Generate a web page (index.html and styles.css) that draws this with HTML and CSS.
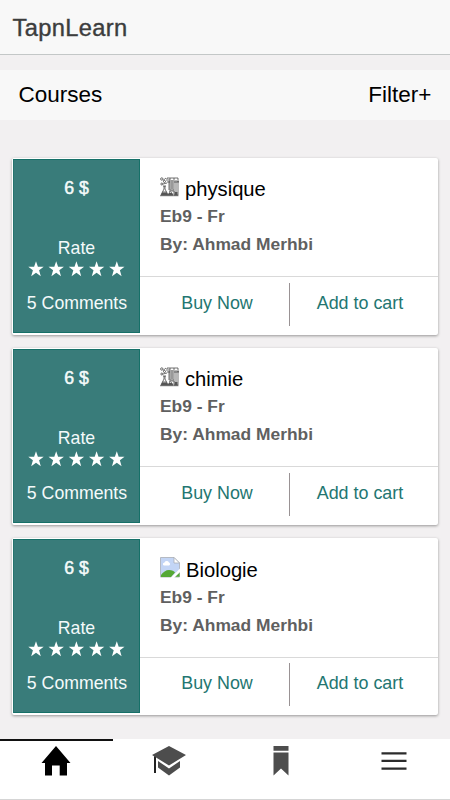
FILE: index.html
```html
<!DOCTYPE html>
<html lang="en">
<head>
<meta charset="utf-8">
<title>TapnLearn</title>
<link rel="stylesheet" href="styles.css">
</head>
<body>
<svg class="defs" width="0" height="0" aria-hidden="true">
  <symbol id="stars" viewBox="0 0 98 16">
    <path id="star" d="M8 .2 9.900 5.700H15.700L11.100 9.300 12.800 15.200 8 11.800 3.200 15.200 4.900 9.300.3 5.700H6.100Z"/>
    <use href="#star" x="20.200"/><use href="#star" x="40.400"/><use href="#star" x="60.600"/><use href="#star" x="80.800"/>
  </symbol>
  <symbol id="lab" viewBox="0 0 20 20">
    <g fill="none" stroke="#333" stroke-width=".7">
      <circle cx="1.800" cy="2" r="1.200"/><circle cx="4.500" cy="4.500" r="1"/><circle cx="1.800" cy="7" r="1"/>
      <path d="M3 3.500 6 1M3 7l4-1M7 4V1h11v4M7 5h3M14 5h5M9 2v11M10 1v12h4V1M16 3v10M18 4v14M3 9h3M4 9v3L1 18h7L5 12V9M2.500 15h4M9 14h8M10 14v1l-2 3h5l-2-3M14 14v4h4M0 18.700h18.500"/>
    </g>
    <path fill="#999" d="M10.500 3h3v9.500h-3z"/>
    <path fill="#555" d="m2 15.500-1 2.500h7l-1-2.500zM9 16l-1 2h5l-1-2zM14.500 15h3v3h-3z"/>
  </symbol>
</svg>

<header class="topbar">TapnLearn</header>
<div class="subbar"><span>Courses</span><span>Filter+</span></div>

<main class="courses">
  <article class="card">
    <div class="side">
      <strong class="price">6 $</strong>
      <span class="rate">Rate</span>
      <svg class="stars" width="98" height="16"><use href="#stars"/></svg>
      <span class="comments">5 Comments</span>
    </div>
    <div class="main">
      <div class="info">
        <h2><svg class="lab" width="20" height="20"><use href="#lab"/></svg><span>physique</span></h2>
        <p>Eb9 - Fr</p>
        <p>By: Ahmad Merhbi</p>
      </div>
      <div class="actions"><a class="buy">Buy Now</a><a class="cart">Add to cart</a></div>
    </div>
  </article>

  <article class="card">
    <div class="side">
      <strong class="price">6 $</strong>
      <span class="rate">Rate</span>
      <svg class="stars" width="98" height="16"><use href="#stars"/></svg>
      <span class="comments">5 Comments</span>
    </div>
    <div class="main">
      <div class="info">
        <h2><svg class="lab" width="20" height="20"><use href="#lab"/></svg><span>chimie</span></h2>
        <p>Eb9 - Fr</p>
        <p>By: Ahmad Merhbi</p>
      </div>
      <div class="actions"><a class="buy">Buy Now</a><a class="cart">Add to cart</a></div>
    </div>
  </article>

  <article class="card card-tall">
    <div class="side">
      <strong class="price">6 $</strong>
      <span class="rate">Rate</span>
      <svg class="stars" width="98" height="16"><use href="#stars"/></svg>
      <span class="comments">5 Comments</span>
    </div>
    <div class="main">
      <div class="info">
        <h2>
          <svg class="lab" width="21" height="21" viewBox="0 0 21 21">
            <path fill="#c3d5f5" stroke="#a9adb5" stroke-width=".8" d="M.5.5H14L19.500 6V20H.5Z"/>
            <path fill="#fff" d="M3 8a2 2 0 0 1 1.500-2.500 2.500 2.500 0 0 1 4.500 0A1.600 1.600 0 0 1 9 8.500H4Z"/>
            <path fill="#55a835" d="M1 18c2-3 5-5 8-5 3 0 5 1 6 2.500L11 20H1ZM14.500 19.800l5-4.300v4.300Z"/>
            <path fill="#fff" stroke="#a9adb5" stroke-width=".8" d="M14 .5V6h5.500Z"/>
            <path fill="#fff" d="M21 10.500 10.500 21H14L21 14Z"/>
          </svg><span>Biologie</span></h2>
        <p>Eb9 - Fr</p>
        <p>By: Ahmad Merhbi</p>
      </div>
      <div class="actions"><a class="buy">Buy Now</a><a class="cart">Add to cart</a></div>
    </div>
  </article>
</main>

<nav class="tabs">
  <a class="tab active"><svg width="30" height="30" viewBox="0 0 30 30"><path d="M15 0 29.500 17H26V29.500H18.700V19.500H11V29.500H4V17H.5Z"/></svg></a>
  <a class="tab"><svg width="34" height="30" viewBox="0 0 34 30"><path fill="#4d4d4d" d="M17 0 34 9 17 19.500 0 9ZM6 15l11 7.500L28 15v6.500L17 29.500 6 21.500Z"/><path fill="#222" d="M2 10 4 11.200V27H2Z"/></svg></a>
  <a class="tab"><svg width="16" height="30" viewBox="0 0 16 30"><path fill="#4d4d4d" d="M.5 0h15v4.700H.5ZM.5 6.500h15v23L8 22.500.5 29.500Z"/></svg></a>
  <a class="tab"><svg width="26" height="30" viewBox="0 0 26 30"><path fill="#2b2b2b" d="M.5 6.200h25v2.300H.5ZM.5 13.800h25v2.300H.5ZM.5 21.500h25v2.300H.5Z"/></svg></a>
</nav>
</body>
</html>
```
FILE: styles.css
```css
* { box-sizing: border-box; }

body {
  margin: 0;
  height: 800px;
  display: flex;
  flex-direction: column;
  overflow: hidden;
  background: #f2f0f1;
  color: #000;
  font-family: "Liberation Sans", Arial, sans-serif;
  white-space: nowrap;
}

svg { display: block; flex: none; }
.defs { position: absolute; }

.topbar {
  height: 55px;
  padding-left: 12.5px;
  border-bottom: 1px solid #c3c7c7;
  background: #f8f8f8;
  color: #3c3d3d;
  font-size: 23.700px;
  letter-spacing: .35px;
  line-height: 57px;
  -webkit-text-stroke: .4px #3c3d3d;
}

.subbar {
  display: flex;
  justify-content: space-between;
  height: 50px;
  margin-top: 15px;
  padding: 0 18.500px;
  background: #f8f8f8;
  font-size: 22.500px;
  line-height: 49px;
}

.courses {
  display: flex;
  flex-direction: column;
  gap: 13px;
  padding: 38px 12px 0;
}

.card {
  display: flex;
  height: 177px;
  padding: 1px 0 2px 1px;
  border-radius: 2px;
  background: #fff;
  box-shadow: 0 1px 3px rgba(0, 0, 0, .38);
}

.side {
  display: flex;
  flex-direction: column;
  align-items: center;
  width: 127px;
  border: 1px solid #167068;
  border-left-color: #25746e;
  background: #397c7a;
  color: #f4fafa;
  font-size: 17.700px;
  line-height: 24px;
}

.price {
  margin-top: 16px;
  font-size: 17.700px;
  font-weight: 400;
  -webkit-text-stroke: .5px #f4fafa;
}
.rate { margin-top: 36px; }
.stars { margin-top: 1px; fill: #fff; }
.comments { margin-top: 14px; padding-left: 1px; }

.main { flex: 1; display: flex; flex-direction: column; }

.info { height: 118px; padding: 17px 0 0 20px; border-bottom: 1px solid #d9d9d9; }
.card-tall .info { height: 119px; }
.card-tall .info h2 { height: 28px; line-height: 29px; }

h2 {
  display: flex;
  gap: 5px;
  height: 27px;
  margin: 0;
  font-size: 20.200px;
  font-weight: 400;
  line-height: 27px;
}
.lab { margin-top: 1px; }

.info p {
  margin: 0;
  color: #606060;
  font-size: 17.400px;
  font-weight: 700;
  line-height: 27.500px;
}

.actions {
  display: flex;
  align-items: center;
  flex: 1;
  padding-bottom: 2px;
  color: #237671;
  font-size: 17.900px;
  text-align: center;
}

.buy,
.cart { height: 43px; line-height: 41px; }
.buy { width: 150px; padding-left: 5px; border-right: 1px solid #999294; }
.cart { flex: 1; padding-right: 8px; }

.tabs {
  display: grid;
  grid-template-columns: repeat(4, 1fr);
  height: 61px;
  margin-top: auto;
  border-bottom: 1px solid #d5d5d5;
  background: #fff;
}

.tab { display: flex; justify-content: center; padding-top: 5px; border-top: 2px solid transparent; }
.tab.active { border-top-color: #111; }
```
